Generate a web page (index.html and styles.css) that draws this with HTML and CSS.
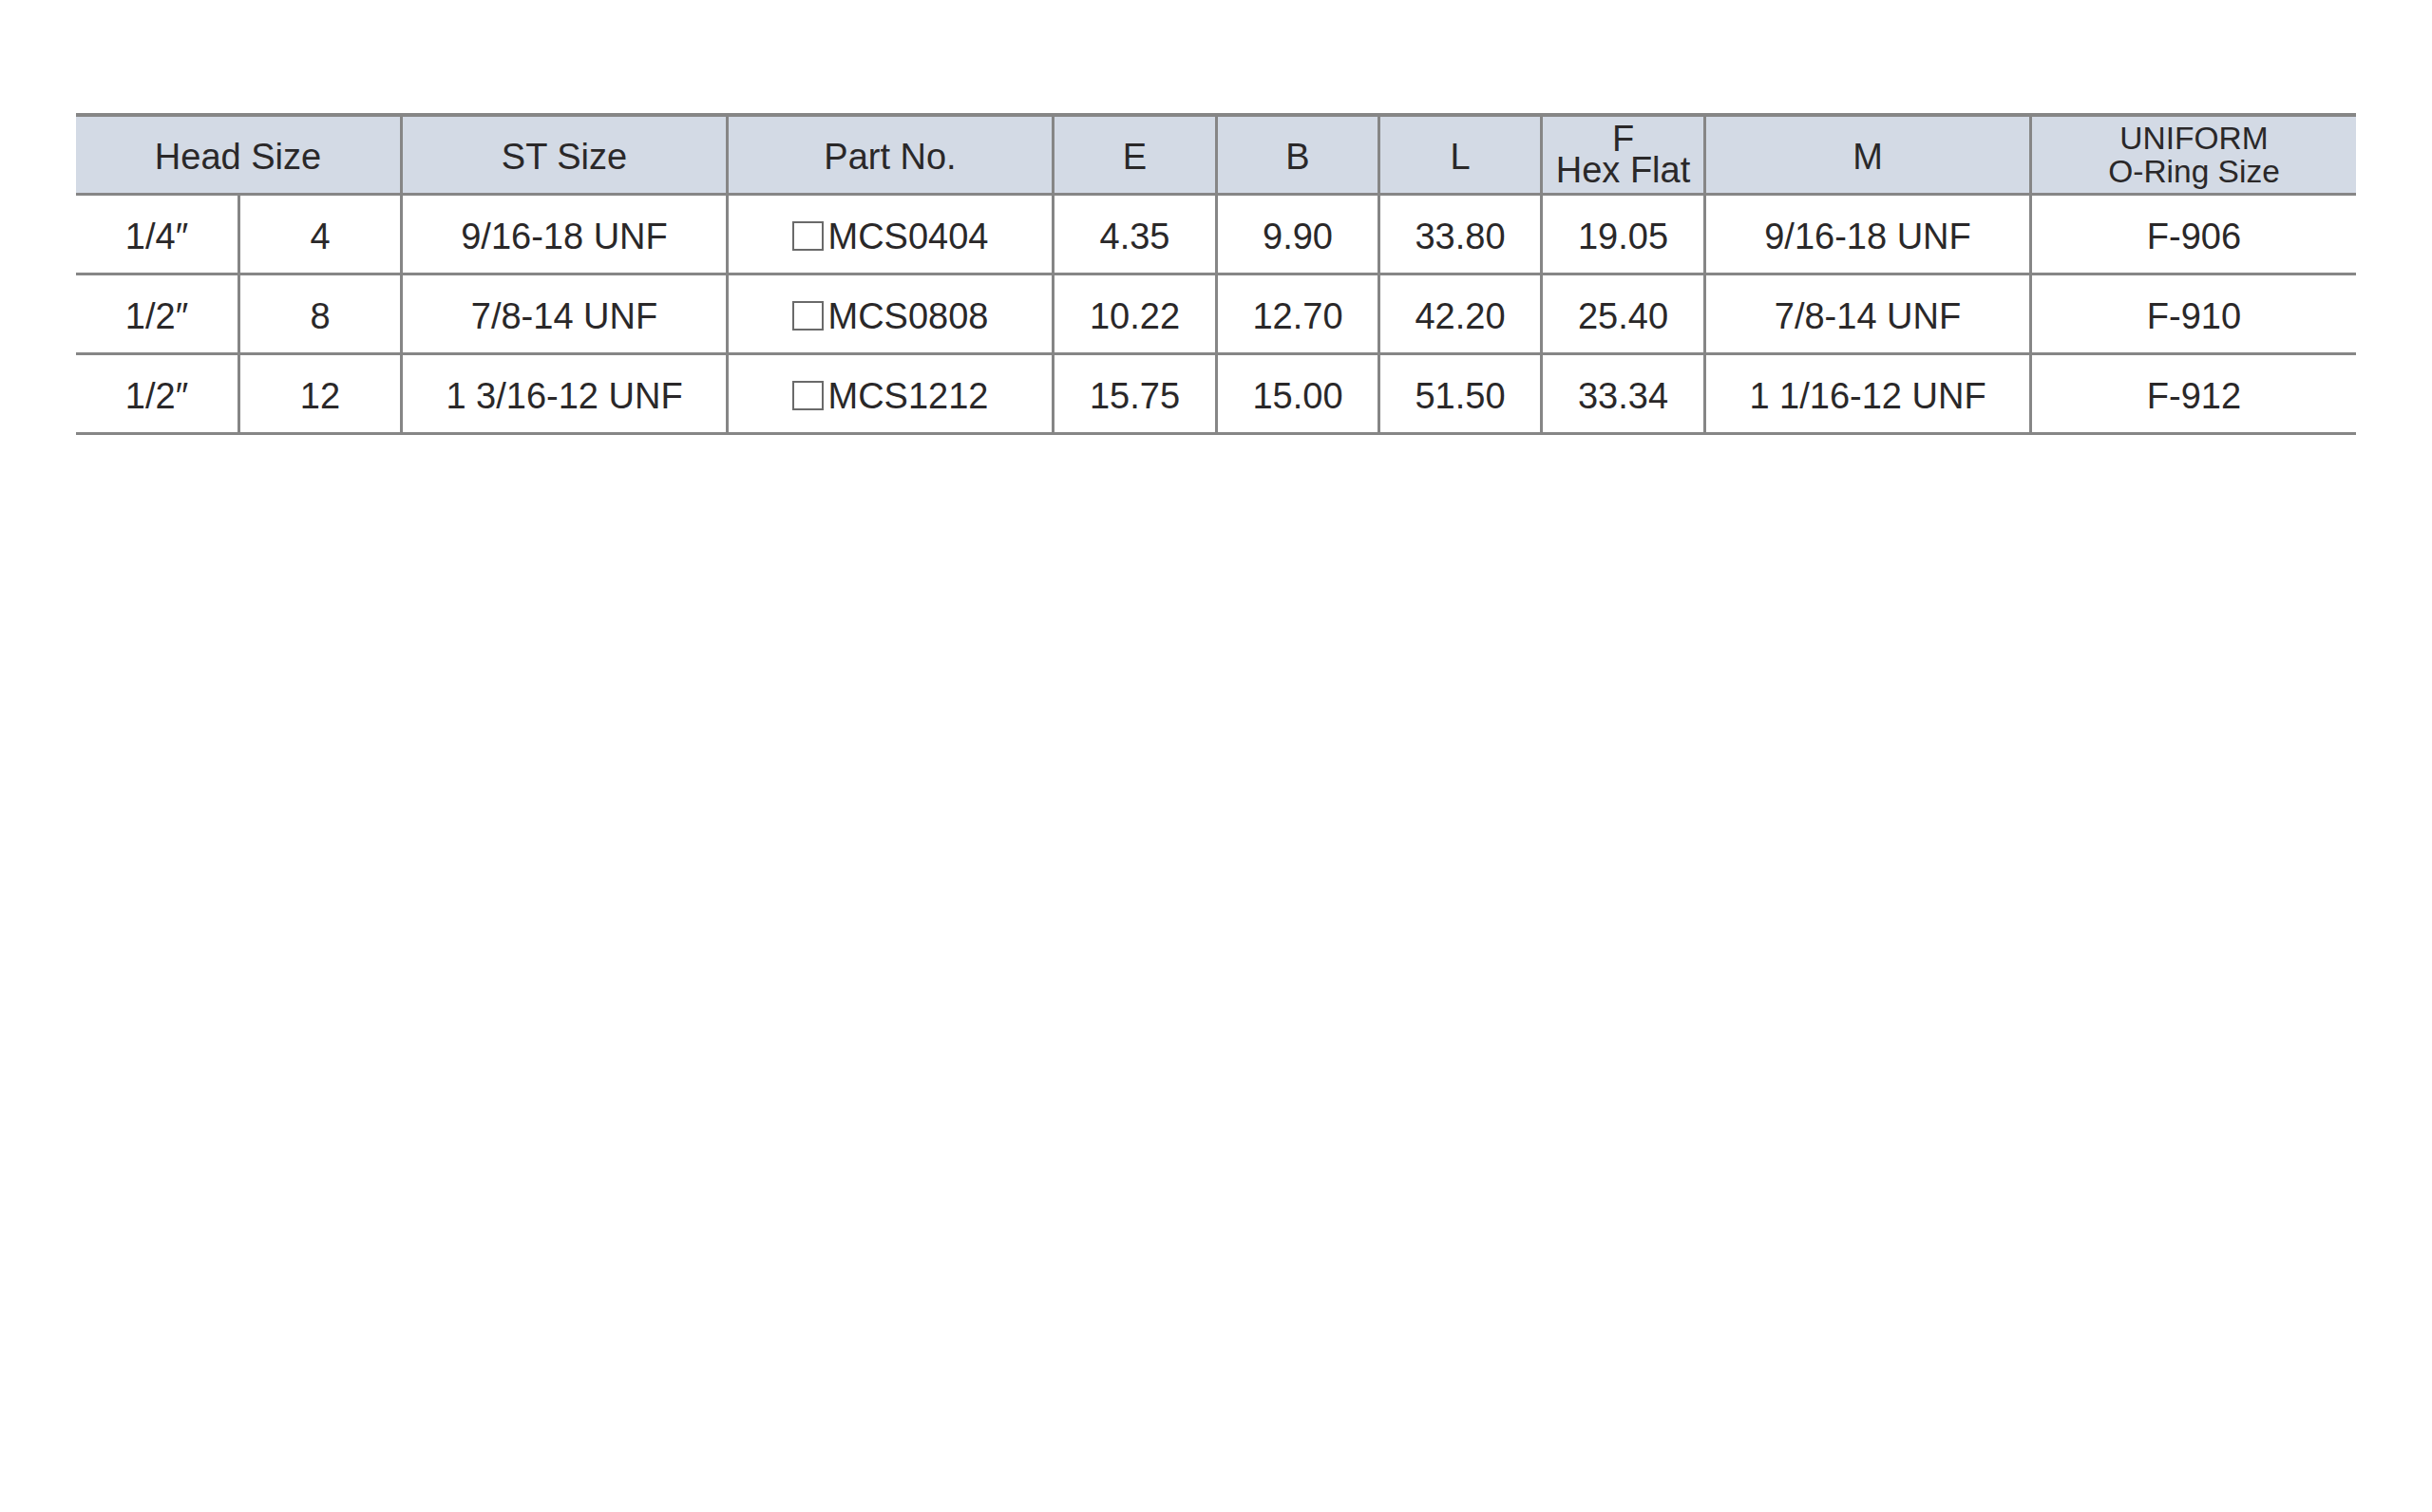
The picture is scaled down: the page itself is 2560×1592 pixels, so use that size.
FILE: index.html
```html
<!DOCTYPE html>
<html lang="en">
<head>
<meta charset="utf-8">
<title>MCS Specifications</title>
<link rel="stylesheet" href="styles.css">
</head>
<body>
<div class="spec-table">
  <div class="cell head span2">Head Size</div>
  <div class="cell head">ST Size</div>
  <div class="cell head">Part No.</div>
  <div class="cell head">E</div>
  <div class="cell head">B</div>
  <div class="cell head">L</div>
  <div class="cell head two-line">F<br>Hex Flat</div>
  <div class="cell head">M</div>
  <div class="cell head two-line small">UNIFORM<br>O-Ring Size</div>

  <div class="cell">1/4″</div>
  <div class="cell">4</div>
  <div class="cell">9/16-18 UNF</div>
  <div class="cell part">MCS0404</div>
  <div class="cell">4.35</div>
  <div class="cell">9.90</div>
  <div class="cell">33.80</div>
  <div class="cell">19.05</div>
  <div class="cell">9/16-18 UNF</div>
  <div class="cell">F-906</div>

  <div class="cell">1/2″</div>
  <div class="cell">8</div>
  <div class="cell">7/8-14 UNF</div>
  <div class="cell part">MCS0808</div>
  <div class="cell">10.22</div>
  <div class="cell">12.70</div>
  <div class="cell">42.20</div>
  <div class="cell">25.40</div>
  <div class="cell">7/8-14 UNF</div>
  <div class="cell">F-910</div>

  <div class="cell">1/2″</div>
  <div class="cell">12</div>
  <div class="cell">1 3/16-12 UNF</div>
  <div class="cell part">MCS1212</div>
  <div class="cell">15.75</div>
  <div class="cell">15.00</div>
  <div class="cell">51.50</div>
  <div class="cell">33.34</div>
  <div class="cell">1 1/16-12 UNF</div>
  <div class="cell">F-912</div>
</div>
</body>
</html>
```

FILE: styles.css
```css
html, body {
  margin: 0;
  padding: 0;
  background: #ffffff;
}

body {
  font-family: "Liberation Sans", Arial, sans-serif;
  color: #2a2829;
}

.spec-table {
  margin: 119px 0 0 80px;
  width: 2400px;
  display: grid;
  grid-template-columns: 170px 168px 340px 340px 169px 168px 168px 169px 340px 341px;
  grid-template-rows: 80px 81px 81px 81px;
  gap: 3px;
  padding: 4px 0 3px 0;
  background: #868686;
}

.cell {
  background: #ffffff;
  display: flex;
  align-items: center;
  justify-content: center;
  text-align: center;
  font-size: 38px;
  line-height: 1;
  white-space: nowrap;
  padding-top: 4px;
}

.head {
  background: #d3dae5;
}

.span2 {
  grid-column: span 2;
}

.two-line {
  line-height: 33px;
  padding-top: 0;
  padding-bottom: 1px;
}

.two-line.small {
  font-size: 33.5px;
  line-height: 35px;
}

.part::before {
  content: "";
  display: inline-block;
  width: 29px;
  height: 27px;
  border: 2px solid #6a6a6a;
  margin-right: 5px;
}
```
